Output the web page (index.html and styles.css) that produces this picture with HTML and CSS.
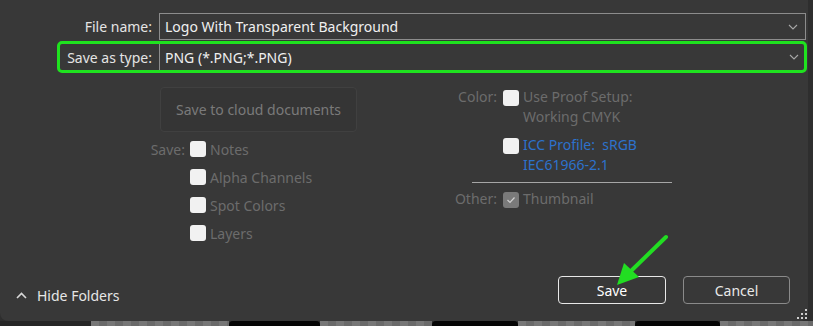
FILE: index.html
```html
<!DOCTYPE html>
<html lang="en">
<head>
  <meta charset="UTF-8" />
  <meta name="viewport" content="width=device-width, initial-scale=1.0"/>
  <title>Save As</title>
  <link rel="stylesheet" href="styles.css">
</head>
<body>
  <div class="dialog">
    <!-- file name -->
    <div class="field-row">
      <span class="field-label">File name:</span>
      <div class="field">
        <span>Logo With Transparent Background</span>
        <svg class="chev" width="10" height="6" viewBox="0 0 10 6"><path d="M1 1l4 4 4-4" fill="none" stroke="#a8a8a8" stroke-width="1.1"/></svg>
      </div>
    </div>

    <!-- save as type (highlighted) -->
    <div class="field-row highlight">
      <span class="field-label">Save as type:</span>
      <div class="field">
        <span>PNG (*.PNG;*.PNG)</span>
        <svg class="chev" width="10" height="6" viewBox="0 0 10 6"><path d="M1 1l4 4 4-4" fill="none" stroke="#a8a8a8" stroke-width="1.1"/></svg>
      </div>
    </div>

    <!-- options -->
    <div class="options">
      <div class="opt-left">
        <button class="cloud-btn">Save to cloud documents</button>
        <div class="save-grid">
          <span class="opt-label">Save:</span>
          <label class="check"><span class="box"></span>Notes</label>
          <span></span>
          <label class="check"><span class="box"></span>Alpha Channels</label>
          <span></span>
          <label class="check"><span class="box"></span>Spot Colors</label>
          <span></span>
          <label class="check"><span class="box"></span>Layers</label>
        </div>
      </div>

      <div class="opt-right">
        <div class="opt-row">
          <span class="opt-label">Color:</span>
          <label class="check"><span class="box"></span><span>Use Proof Setup:<br>Working CMYK</span></label>
        </div>
        <div class="opt-row second">
          <span></span>
          <label class="check link"><span class="box"></span><span>ICC Profile:&nbsp; sRGB<br>IEC61966-2.1</span></label>
        </div>
        <div class="divider"></div>
        <div class="opt-row third">
          <span class="opt-label">Other:</span>
          <label class="check"><span class="box checked"><svg width="10" height="8" viewBox="0 0 10 8"><path d="M1.5 4l2.5 2.5 4.5-5" fill="none" stroke="#d0d0d0" stroke-width="1.2"/></svg></span>Thumbnail</label>
        </div>
      </div>
    </div>

    <!-- footer -->
    <div class="footer">
      <button class="hide-folders">
        <svg width="11" height="7" viewBox="0 0 11 7"><path d="M1 6l4.5-4.5L10 6" fill="none" stroke="#d8d8d8" stroke-width="1.6"/></svg>
        Hide Folders
      </button>
      <div class="actions">
        <button class="btn primary">Save</button>
        <button class="btn">Cancel</button>
      </div>
    </div>

    <svg class="arrow" width="808" height="321" viewBox="0 0 808 321">
      <line x1="666" y1="237" x2="632" y2="270" stroke="#22dd22" stroke-width="4" stroke-linecap="round"/>
      <polygon points="617,285 624,263 639,277" fill="#22dd22"/>
    </svg>

    <svg class="grip" width="12" height="12" viewBox="0 0 12 12">
      <rect x="9" y="1" width="2" height="2" fill="#cfcfcf"/>
      <rect x="5" y="5" width="2" height="2" fill="#cfcfcf"/>
      <rect x="9" y="5" width="2" height="2" fill="#cfcfcf"/>
      <rect x="1" y="9" width="2" height="2" fill="#cfcfcf"/>
      <rect x="5" y="9" width="2" height="2" fill="#cfcfcf"/>
      <rect x="9" y="9" width="2" height="2" fill="#cfcfcf"/>
    </svg>
  </div>

  <!-- canvas peeking below the dialog -->
  <div class="canvas-strip">
    <div class="dark" style="width: 91px"></div>
    <div class="checker" style="width: 138px"></div>
    <div class="black" style="width: 91px"></div>
    <div class="checker" style="width: 112px"></div>
    <div class="black" style="width: 86px"></div>
    <div class="checker" style="width: 117px"></div>
    <div class="black" style="width: 85px"></div>
    <div class="checker" style="flex: 1"></div>
  </div>
</body>
</html>
```

FILE: styles.css
```css
body {
  margin: 0;
  background-color: #2e2e2e;
  font-family: "Noto Sans", "Open Sans", sans-serif;
  font-size: 14px;
  color: #e2e2e2;
  width: 813px;
  height: 326px;
  overflow: hidden;
}

.dialog {
  position: relative;
  width: 808px;
  height: 321px;
  box-sizing: border-box;
  padding-top: 13px;
  background-color: #383838;
  border-radius: 0 0 8px 8px;
  display: flex;
  flex-direction: column;
}

/* top fields */
.field-row {
  display: flex;
  align-items: center;
  gap: 7px;
}
.field-label {
  width: 152px;
  text-align: right;
  color: #e4e4e4;
  flex-shrink: 0;
}
.field {
  width: 647px;
  height: 27px;
  box-sizing: border-box;
  border: 1px solid #8c8c8c;
  padding: 0 7px 0 5px;
  display: flex;
  align-items: center;
  justify-content: space-between;
  color: #f0f0f0;
}
.highlight {
  margin: 1px 0 0 57px;
  width: 750px;
  height: 32px;
  box-sizing: border-box;
  border: 3px solid #1fe21f;
  border-radius: 5px;
}
.highlight .field-label {
  width: 92px;
}
.highlight .field {
  width: 644px;
  height: 26px;
  border: none;
  border-left: 1px solid #8c8c8c;
  padding-right: 4px;
}

/* options */
.options {
  display: flex;
  margin-top: 14px;
}
.opt-left {
  width: 300px;
  padding-left: 140px;
  box-sizing: content-box;
}
.cloud-btn {
  margin-left: 20px;
  width: 197px;
  height: 45px;
  padding-top: 1px;
  background: #353535;
  border: 1px solid #404040;
  border-radius: 4px;
  font-family: inherit;
  font-size: 14px;
  color: #7a7a7a;
}
.save-grid {
  margin-top: 3px;
  display: grid;
  grid-template-columns: 45px auto;
  grid-auto-rows: 28px;
  column-gap: 5px;
  align-items: center;
}
.opt-label {
  text-align: right;
  color: #6c6c6c;
}
.check {
  display: flex;
  align-items: center;
  gap: 4px;
  color: #6c6c6c;
}
.box {
  width: 16px;
  height: 16px;
  border-radius: 3px;
  background: #f1f1f1;
  flex-shrink: 0;
  display: flex;
  align-items: center;
  justify-content: center;
}
.box.checked {
  background: #7a7a7a;
}

.opt-right {
  width: 240px;
}
.opt-row {
  display: grid;
  grid-template-columns: 57px auto;
  column-gap: 6px;
  line-height: 20px;
}
.opt-row .check {
  align-items: flex-start;
}
.opt-row .box {
  margin-top: 3px;
}
.opt-row.second {
  margin-top: 8px;
}
.opt-row.third {
  margin-top: 6px;
}
.check.link {
  color: #2d72cc;
}
.divider {
  margin: 7px 0 0 32px;
  width: 200px;
  height: 1px;
  background: #a6a6a6;
}

/* footer */
.footer {
  margin-top: auto;
  padding: 0 18px 17px 16px;
  display: flex;
  align-items: flex-end;
  justify-content: space-between;
}
.hide-folders {
  display: flex;
  align-items: center;
  gap: 10px;
  height: 20px;
  margin-bottom: -1px;
  padding: 0;
  background: none;
  border: none;
  font-family: inherit;
  font-size: 14px;
  color: #e6e6e6;
}
.actions {
  display: flex;
  gap: 17px;
}
.btn {
  width: 107px;
  height: 28px;
  background: #383838;
  border: 1px solid #8a8a8a;
  border-radius: 4px;
  font-family: inherit;
  font-size: 14px;
  color: #e8e8e8;
}
.btn.primary {
  width: 108px;
  border-color: #e8e8e8;
  color: #ffffff;
}

.arrow {
  position: absolute;
  left: 0;
  top: 0;
  pointer-events: none;
}
.grip {
  position: absolute;
  right: 0;
  bottom: 1px;
}

/* canvas below */
.canvas-strip {
  display: flex;
  height: 5px;
}
.dark { background: #262626; }
.black {
  background: #050505;
  border-radius: 4px 4px 0 0;
}
.checker {
  background-color: #777777;
  background-image:
    linear-gradient(45deg, #6a6a6a 25%, transparent 25%, transparent 75%, #6a6a6a 75%),
    linear-gradient(45deg, #6a6a6a 25%, transparent 25%, transparent 75%, #6a6a6a 75%);
  background-size: 16px 16px;
  background-position: 0 0, 8px 8px;
}
```
